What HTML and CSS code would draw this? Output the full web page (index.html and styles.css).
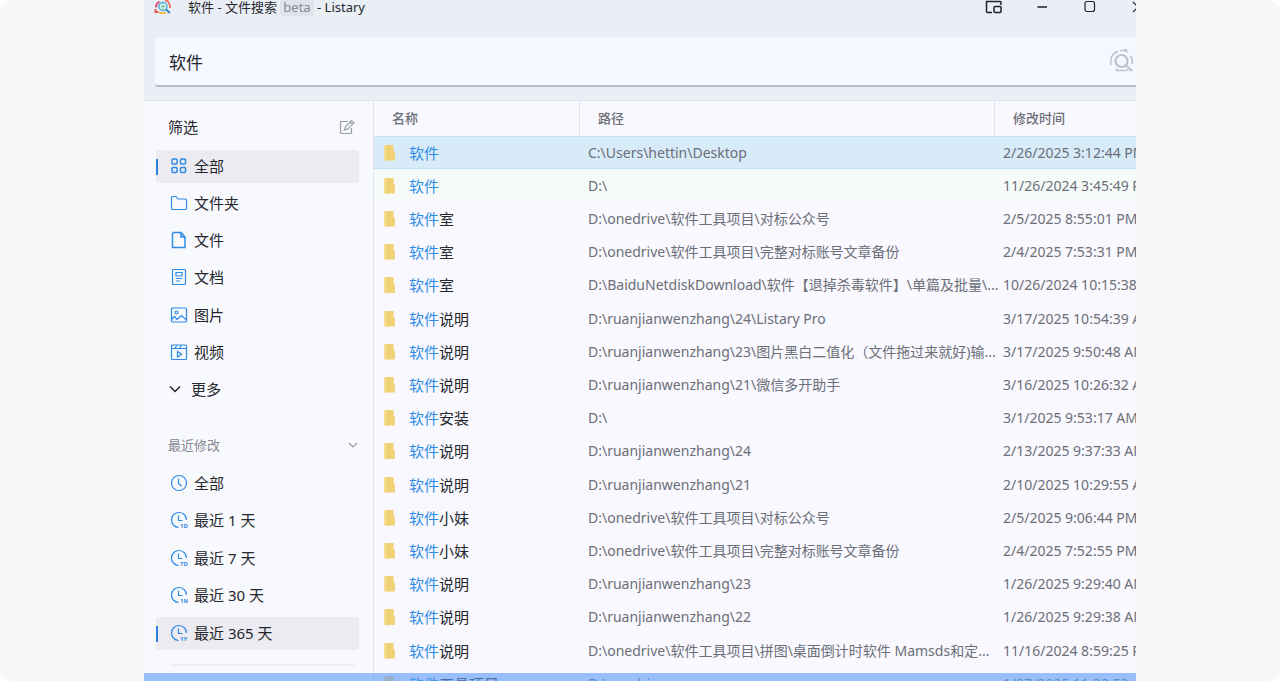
FILE: index.html
```
<!DOCTYPE html>
<html lang="zh-CN">
<head>
    <meta charset="UTF-8">
    <meta name="viewport" content="width=device-width, initial-scale=1.0">
    <title>软件 - 文件搜索 - Listary</title>
    <link rel="stylesheet" href="styles.css">
</head>
<body>

<div class="stage">
<div class="frame">
<div class="window">
    <!-- Title bar -->
    <header class="titlebar">
        <svg class="logo" viewBox="0 0 18 16" fill="none" stroke-width="2">
            <path d="M2 7.500a7 7 0 0 1 3.500-6" stroke="#d9506a"/>
            <path d="M11 0a7 7 0 0 1 5 6v2" stroke="#e8705c"/>
            <path d="M1.500 9v3h3" stroke="#e2574f"/>
            <path d="M5 13h7" stroke="#f2bd4e"/>
            <circle cx="9" cy="6.500" r="4" stroke="#4db3dc" fill="#d4f1ef" stroke-width="1.500"/>
            <path d="M12 9.500l4 3.500" stroke="#3a80be"/>
            <path d="M9 4.500v4M7 6.500h4" stroke="#6cc6a2" stroke-width="1"/>
        </svg>
        <h1 class="title">软件 - 文件搜索 <span class="beta">beta</span> - Listary</h1>
        <div class="window-buttons">
            <button aria-label="Compact mode">
                <svg viewBox="0 0 18 14" fill="none" stroke="#1d2228" stroke-width="1.500"><path d="M7 12.500H2.500a1 1 0 0 1-1-1v-10h13.500a1 1 0 0 1 1 1V5"/><rect x="9" y="6.500" width="7" height="6" rx="1"/></svg>
            </button>
            <button aria-label="Minimize">
                <svg viewBox="0 0 18 14" fill="none" stroke="#1d2228" stroke-width="1.500"><path d="M4.500 7h9.500"/></svg>
            </button>
            <button aria-label="Maximize">
                <svg viewBox="0 0 18 14" fill="none" stroke="#1d2228" stroke-width="1.200"><rect x="4" y="1.500" width="9.500" height="10" rx="2"/></svg>
            </button>
            <button aria-label="Close">
                <svg viewBox="0 0 18 14" fill="none" stroke="#1d2228" stroke-width="1.200"><path d="M4 2l10 10M14 2L4 12"/></svg>
            </button>
        </div>
    </header>

    <!-- Search box -->
    <div class="search">
        <input type="text" value="软件" aria-label="搜索">
        <svg class="search-icon" viewBox="0 0 24 24" fill="none" stroke="#bcc2cd" stroke-width="1.500">
            <path d="M8 2.500A10 10 0 0 0 1.500 16" />
            <path d="M10 1.500h5l3 2M20.500 7a10 10 0 0 1 1.500 8"/>
            <path d="M6 22l1-2.500M6 21.500h9.500l3-1"/>
            <path d="M14 1h3" stroke-width="2.500"/>
            <circle cx="11.500" cy="12" r="6" stroke-width="2.200"/>
            <path d="M16 16.500l6 5.500" stroke-width="2.200"/>
        </svg>
    </div>

    <div class="content">
        <!-- Filters -->
        <aside class="sidebar">
            <div class="sidebar-head">
                <h2>筛选</h2>
                <button class="icon-button" aria-label="Edit">
                    <svg viewBox="0 0 16 16" fill="none" stroke="#9a9da6" stroke-width="1.200"><path d="M9 2.500H2.500a1 1 0 0 0-1 1v10a1 1 0 0 0 1 1h9a1 1 0 0 0 1-1V9M5.500 11l1-3.500 6-6 2.500 2.300-6 6zM11 3l2.500 2.300"/></svg>
                </button>
            </div>
            <nav class="filters type-filters">
                <button class="filter active">
                    <svg viewBox="0 0 18 18" class="strong"><rect x="2" y="2" width="5" height="5" rx="1"/><rect x="10.500" y="2" width="5" height="5" rx="1"/><rect x="2" y="10.500" width="5" height="5" rx="1"/><rect x="10.500" y="10.500" width="5" height="5" rx="1"/></svg>
                    全部
                </button>
                <button class="filter">
                    <svg viewBox="0 0 18 18"><path d="M1.500 14.500v-11a1 1 0 0 1 1-1H6l2 2.500h7.500a1 1 0 0 1 1 1v8.500a1 1 0 0 1-1 1h-13a1 1 0 0 1-1-1z"/></svg>
                    文件夹
                </button>
                <button class="filter">
                    <svg viewBox="0 0 18 18" class="strong"><path d="M3.500 1.500h7.500l4 4.500v10.500h-12.500v-14zM11 1.500v4.500h4"/></svg>
                    文件
                </button>
                <button class="filter">
                    <svg viewBox="0 0 18 18"><rect x="2.500" y="1.500" width="13" height="15" rx="1"/><path d="M6 4.500h6v3.500h-6zM6 10.500h6.500M6 13h4"/></svg>
                    文档
                </button>
                <button class="filter">
                    <svg viewBox="0 0 18 18"><rect x="1.500" y="2" width="15" height="14" rx="1"/><circle cx="6.500" cy="6.500" r="1.500"/><path d="M1.500 13.500l3-3 2.500 3 4.500-4 5 4.500"/></svg>
                    图片
                </button>
                <button class="filter">
                    <svg viewBox="0 0 18 18"><rect x="1.500" y="2" width="15" height="14.500" rx="1"/><path d="M1.500 5.500h15M5 5.500l2-3.500M9.500 5.500l2-3.500M7.500 8.500v5.500l4-2.700z"/></svg>
                    视频
                </button>
                <button class="filter more">
                    <svg viewBox="0 0 18 18"><path d="M4 6.500l5 5 5-5"/></svg>
                    更多
                </button>
            </nav>

            <div class="sidebar-head recent-head">
                <h3>最近修改</h3>
                <button class="icon-button" aria-label="Collapse">
                    <svg viewBox="0 0 16 16" fill="none" stroke="#999ca5" stroke-width="1.200"><path d="M4 6l4 4 4-4"/></svg>
                </button>
            </div>
            <nav class="filters date-filters">
                <button class="filter">
                    <svg viewBox="0 0 18 18"><circle cx="9" cy="9" r="7.500"/><path d="M8.500 4.500v5l3 2.500"/></svg>
                    全部
                </button>
                <button class="filter">
                    <svg viewBox="0 0 18 18"><path d="M8.500 16.500A7.500 7.500 0 1 1 16.500 9M8.500 4.500v5h4"/><text x="10" y="17">1D</text></svg>
                    最近 1 天
                </button>
                <button class="filter">
                    <svg viewBox="0 0 18 18"><path d="M8.500 16.500A7.500 7.500 0 1 1 16.500 9M8.500 4.500v5h4"/><text x="10" y="17">7D</text></svg>
                    最近 7 天
                </button>
                <button class="filter">
                    <svg viewBox="0 0 18 18"><path d="M8.500 16.500A7.500 7.500 0 1 1 16.500 9M8.500 4.500v5h4"/><text x="10" y="17">1M</text></svg>
                    最近 30 天
                </button>
                <button class="filter active">
                    <svg viewBox="0 0 18 18"><path d="M8.500 16.500A7.500 7.500 0 1 1 16.500 9M8.500 4.500v5h4"/><text x="10" y="17">1Y</text></svg>
                    最近 365 天
                </button>
            </nav>
            <hr>
        </aside>

        <!-- Results -->
        <main class="results">
            <table>
                <colgroup>
                    <col class="col-name">
                    <col class="col-path">
                    <col>
                </colgroup>
                <thead>
                    <tr><th>名称</th><th>路径</th><th>修改时间</th></tr>
                </thead>
                <tbody>
                    <tr class="selected"><td><mark>软件</mark></td><td>C:\Users\hettin\Desktop</td><td>2/26/2025 3:12:44 PM</td></tr>
                    <tr class="tinted"><td><mark>软件</mark></td><td>D:\</td><td>11/26/2024 3:45:49 PM</td></tr>
                    <tr><td><mark>软件</mark>室</td><td>D:\onedrive\软件工具项目\对标公众号</td><td>2/5/2025 8:55:01 PM</td></tr>
                    <tr><td><mark>软件</mark>室</td><td>D:\onedrive\软件工具项目\完整对标账号文章备份</td><td>2/4/2025 7:53:31 PM</td></tr>
                    <tr><td><mark>软件</mark>室</td><td>D:\BaiduNetdiskDownload\软件【退掉杀毒软件】\单篇及批量\...</td><td>10/26/2024 10:15:38 AM</td></tr>
                    <tr><td><mark>软件</mark>说明</td><td>D:\ruanjianwenzhang\24\Listary Pro</td><td>3/17/2025 10:54:39 AM</td></tr>
                    <tr><td><mark>软件</mark>说明</td><td>D:\ruanjianwenzhang\23\图片黑白二值化（文件拖过来就好)输...</td><td>3/17/2025 9:50:48 AM</td></tr>
                    <tr><td><mark>软件</mark>说明</td><td>D:\ruanjianwenzhang\21\微信多开助手</td><td>3/16/2025 10:26:32 AM</td></tr>
                    <tr><td><mark>软件</mark>安装</td><td>D:\</td><td>3/1/2025 9:53:17 AM</td></tr>
                    <tr><td><mark>软件</mark>说明</td><td>D:\ruanjianwenzhang\24</td><td>2/13/2025 9:37:33 AM</td></tr>
                    <tr><td><mark>软件</mark>说明</td><td>D:\ruanjianwenzhang\21</td><td>2/10/2025 10:29:55 AM</td></tr>
                    <tr><td><mark>软件</mark>小妹</td><td>D:\onedrive\软件工具项目\对标公众号</td><td>2/5/2025 9:06:44 PM</td></tr>
                    <tr><td><mark>软件</mark>小妹</td><td>D:\onedrive\软件工具项目\完整对标账号文章备份</td><td>2/4/2025 7:52:55 PM</td></tr>
                    <tr><td><mark>软件</mark>说明</td><td>D:\ruanjianwenzhang\23</td><td>1/26/2025 9:29:40 AM</td></tr>
                    <tr><td><mark>软件</mark>说明</td><td>D:\ruanjianwenzhang\22</td><td>1/26/2025 9:29:38 AM</td></tr>
                    <tr><td><mark>软件</mark>说明</td><td>D:\onedrive\软件工具项目\拼图\桌面倒计时软件 Mamsds和定...</td><td>11/16/2024 8:59:25 PM</td></tr>
                    <tr><td><mark>软件</mark>工具项目</td><td>D:\onedrive</td><td>1/27/2025 11:33:53 AM</td></tr>
                </tbody>
            </table>
        </main>
    </div>
</div>
<div class="bottom-band"></div>
</div>
</div>

</body>
</html>
```

FILE: styles.css
```
*, *::before, *::after {
    margin: 0;
    padding: 0;
    box-sizing: border-box;
}

:root {
    --blue: #2f8be6;
    --text: #25272d;
    --muted: #6c6f78;
    --line: #e1e4ee;
}

body {
    font-family: "Noto Sans", "Noto Sans CJK SC", sans-serif;
    font-size: 15px;
    color: var(--text);
    background: #fff;
}

button, input {
    font: inherit;
    color: inherit;
    border: none;
    background: none;
}

.stage {
    height: 100vh;
    padding: 0 144px;
    border-radius: 12px;
    background: linear-gradient(90deg, #f7f7f7 50%, #f6f7f9 50%);
    overflow: hidden;
}

.frame {
    position: relative;
    height: 100%;
    overflow: hidden;
}

/* The window runs a little past the frame on the right */
.window {
    display: flex;
    flex-direction: column;
    height: 100%;
    margin-right: -26px;
    background: #eaeff6;
}

/* Title bar */
.titlebar {
    display: flex;
    align-items: flex-start;
    flex-shrink: 0;
    height: 37px;
    padding-left: 10px;
}

.logo {
    width: 18px;
    height: 16px;
    margin-right: 16px;
}

.title {
    font-size: 13px;
    font-weight: 400;
    line-height: 14px;
    white-space: nowrap;
}

.beta {
    padding: 0 3px;
    border-radius: 3px;
    color: #858b95;
    background: #dfe4eb;
}

.window-buttons {
    display: flex;
    margin-left: auto;
}

.window-buttons button {
    display: flex;
    justify-content: center;
    width: 48px;
    height: 14px;
}

.window-buttons svg {
    width: 18px;
    height: 14px;
}

/* Search */
.search {
    display: flex;
    align-items: center;
    flex-shrink: 0;
    height: 50px;
    margin: 0 0 13px 11px;
    padding: 0 28px 0 14px;
    border-bottom: 2px solid #b7bdca;
    border-radius: 3px 0 0 3px;
    background: #f6f8ff;
}

.search input {
    flex: 1;
    font-size: 17px;
    outline: none;
}

.search-icon {
    width: 24px;
    height: 24px;
}

.content {
    display: flex;
    flex: 1;
    min-height: 0;
    border-top: 1px solid var(--line);
    background: #f8f8fe;
}

/* Sidebar */
.sidebar {
    flex: 0 0 230px;
    padding: 0 14px 0 12px;
    border-right: 1px solid var(--line);
    background: #f8f9fd;
}

.sidebar-head {
    display: flex;
    align-items: center;
    justify-content: space-between;
    height: 49px;
    padding: 2px 4px 0 12px;
}

.sidebar-head h2 {
    font-size: 15px;
    font-weight: 400;
}

.sidebar-head h3 {
    font-size: 13px;
    font-weight: 400;
    color: #858891;
}

.icon-button {
    display: flex;
}

.icon-button svg {
    width: 16px;
    height: 16px;
}

.recent-head {
    height: 60px;
    padding: 15px 0 0 12px;
    margin-right: -2px;
}

.filters {
    display: flex;
    flex-direction: column;
    justify-content: space-between;
}

.type-filters {
    min-height: 257px;
}

.date-filters {
    min-height: 183px;
}

.filter {
    display: flex;
    align-items: center;
    gap: 6px;
    height: 33px;
    padding: 0 0 2px 12px;
    border-left: 2px solid transparent;
    line-height: 20px;
    white-space: nowrap;
}

.filter.active {
    border-radius: 0 3px 3px 0;
    border-image: linear-gradient(transparent 26%, #2f7fd8 26%, #2f7fd8 76%, transparent 76%) 0 0 0 2;
    background: #ebebf1;
}

.filter svg {
    width: 18px;
    height: 18px;
    fill: none;
    stroke: var(--blue);
    stroke-width: 1.2;
}

.filter svg.strong {
    stroke-width: 1.5;
}

.filter text {
    font-size: 6px;
    font-weight: 700;
    fill: var(--blue);
    stroke: none;
}

.filter.more {
    gap: 7px;
    padding-left: 8px;
}

.filter.more svg {
    stroke: var(--text);
    stroke-width: 1.5;
}

.sidebar hr {
    margin: 14px 4px 0 14px;
    border: none;
    border-top: 2px solid #eeeff3;
}

/* Results table */
.results {
    flex: 1;
    min-width: 0;
}

.results table {
    width: 100%;
    table-layout: fixed;
    border-collapse: separate;
    border-spacing: 0;
}

.col-name {
    width: 206px;
}

.col-path {
    width: 415px;
}

.results th {
    height: 35px;
    padding: 0 0 2px 18px;
    border-right: 1px solid var(--line);
    font-size: 13px;
    font-weight: 500;
    line-height: 20px;
    text-align: left;
    color: var(--muted);
}

.results td {
    height: 33px;
    padding-left: 8px;
    font-size: 14px;
    line-height: 20px;
    color: var(--muted);
    white-space: nowrap;
}

.results tr:nth-child(5n) td {
    height: 34px;
}

.results td:first-child {
    padding-left: 10px;
    font-size: 15px;
    color: var(--text);
}

/* Folder icon */
.results td:first-child::before {
    content: "";
    display: inline-block;
    width: 11px;
    height: 17px;
    margin-right: 14px;
    border-radius: 1px 2px 1px 1px;
    background: linear-gradient(90deg, #f6dc8e 2px, #efcf72 3px, #f1d37a);
    clip-path: polygon(0 0, 88% 0, 88% 40%, 100% 46%, 100% 94%, 30% 94%, 24% 100%, 0 90%);
    vertical-align: -3px;
}

.results mark {
    color: var(--blue);
    background: none;
}

.results .selected td {
    border-top: 1px solid #c1e3f5;
    border-bottom: 1px solid #c1e3f5;
    background: #d8ebf9;
}

.results .tinted td {
    background: #f6fbfa;
}

/* Blue edge laid over the bottom of the window */
.bottom-band {
    position: absolute;
    inset: auto 0 0 0;
    height: 8px;
    background: rgba(93, 157, 248, 0.62);
}
```
